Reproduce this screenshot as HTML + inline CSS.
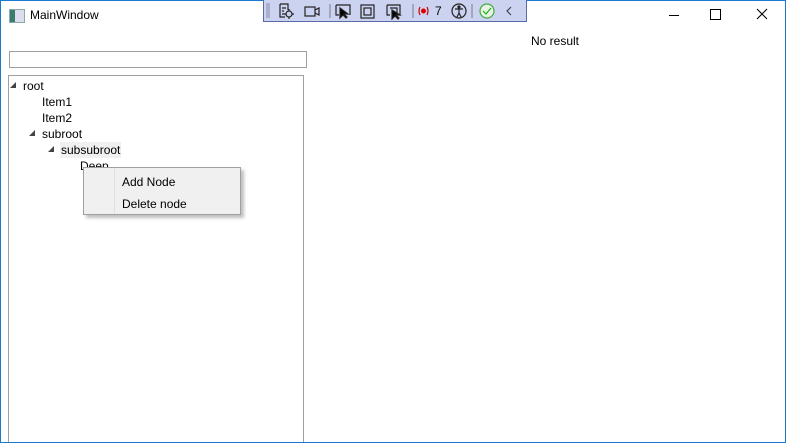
<!DOCTYPE html>
<html><head><style>
body{margin:0;width:786px;height:443px;overflow:hidden;background:#fff;font-family:"Segoe UI","Liberation Sans",sans-serif;font-size:12px;color:#000;position:relative}
.a{position:absolute}
.win{left:0;top:0;width:784px;height:441px;border:1px solid #1a7ad0}
.t{white-space:nowrap}
.tri{width:0;height:0;border-left:6px solid transparent;border-bottom:6px solid #444}
</style></head><body>
<div class="a win"></div>
<div class="a" style="left:9px;top:9px;width:14px;height:12px;border:1px solid #8aa;background:linear-gradient(90deg,#3a7d6e 0 5px,#dde 5px)"></div>
<div class="a t" style="left:30px;top:8px;font-size:12px">MainWindow</div>
<div class="a" style="left:263px;top:0;width:262px;height:21px;background:#ccd3f0;border:1px solid #5a6aa8;border-top:none"></div>
<div class="a" style="left:266px;top:3px;width:4px;height:15px;background-image:radial-gradient(#556 0.6px,transparent 0.8px);background-size:2px 2px"></div>
<svg class="a" style="left:275px;top:2px" width="250" height="18" viewBox="0 0 250 18" fill="none" stroke="#222" stroke-width="1.2">
<path d="M5 2h8v6M5 2v13h5M7 6h4M7 9h2M7 12h2"/><circle cx="14" cy="12" r="3"/><path d="M14 7v2M14 15v2M9 12h2M17 12h2"/>
<rect x="30" y="5" width="10" height="9"/><path d="M40 8l4-2v7l-4-2"/>
<path d="M55 2v14" stroke="#889"/>
<path d="M61 3h14v10M61 3v10h3"/><path d="M65 6l0 10 3-3 3 3 1-1-3-3 4 0z" fill="#000"/>
<rect x="86" y="3" width="13" height="13"/><rect x="89" y="6" width="7" height="7"/>
<path d="M112 3h13v10M112 3v10h3M115 6h7v5"/><path d="M117 8l0 9 3-3 3 3 1-1-3-3 4 0z" fill="#000"/>
<path d="M138 2v14" stroke="#889"/>
<path d="M145 5q-2 4 0 8M152 5q2 4 0 8" stroke="#c00"/><circle cx="148.5" cy="9" r="2.5" fill="#d00" stroke="none"/>
<circle cx="184" cy="9" r="7"/><circle cx="184" cy="5" r="1" fill="#222"/><path d="M180 7h8M184 7v4l-2 4M184 11l2 4"/>
<path d="M197 2v14" stroke="#889"/>
<circle cx="212" cy="9" r="7" stroke="#4a4" fill="#e6f5e0"/><path d="M208 9l3 3 5-6" stroke="#2a2"/>
<path d="M236 5l-4 4 4 4" stroke="#445"/>
</svg>
<div class="a t" style="left:435px;top:4px;font-size:12px">7</div>
<div class="a" style="left:669px;top:15px;width:10px;height:1px;background:#000"></div>
<div class="a" style="left:710px;top:9px;width:9px;height:9px;border:1px solid #000"></div>
<svg class="a" style="left:756px;top:8px" width="12" height="12"><path d="M1 1l10 10M11 1L1 11" stroke="#000" stroke-width="1.1"/></svg>
<div class="a" style="left:9px;top:51px;width:296px;height:15px;border:1px solid #a0a0a0"></div>
<div class="a" style="left:8px;top:75px;width:294px;height:366px;border:1px solid #a0a0a0;border-bottom:none"></div>
<div class="a t" style="left:531px;top:34px">No result</div>
<div class="a tri" style="left:10px;top:82px"></div>
<div class="a t" style="left:23px;top:79px">root</div>
<div class="a t" style="left:42px;top:95px">Item1</div>
<div class="a t" style="left:42px;top:111px">Item2</div>
<div class="a tri" style="left:29px;top:130px"></div>
<div class="a t" style="left:42px;top:127px">subroot</div>
<div class="a tri" style="left:48px;top:146px"></div>
<div class="a" style="left:60px;top:142px;width:61px;height:16px;background:#f0f0f0"></div>
<div class="a t" style="left:61px;top:143px">subsubroot</div>
<div class="a t" style="left:80px;top:159px">Deep</div>
<div class="a" style="left:86px;top:170px;width:158px;height:48px;background:rgba(0,0,0,0.25);filter:blur(1.5px)"></div>
<div class="a" style="left:83px;top:167px;width:156px;height:46px;background:#f0f0f0;border:1px solid #a0a0a0"></div>
<div class="a" style="left:114px;top:168px;width:1px;height:46px;background:#e0e0e0"></div>
<div class="a t" style="left:122px;top:175px">Add Node</div>
<div class="a t" style="left:122px;top:197px">Delete node</div>
</body></html>
